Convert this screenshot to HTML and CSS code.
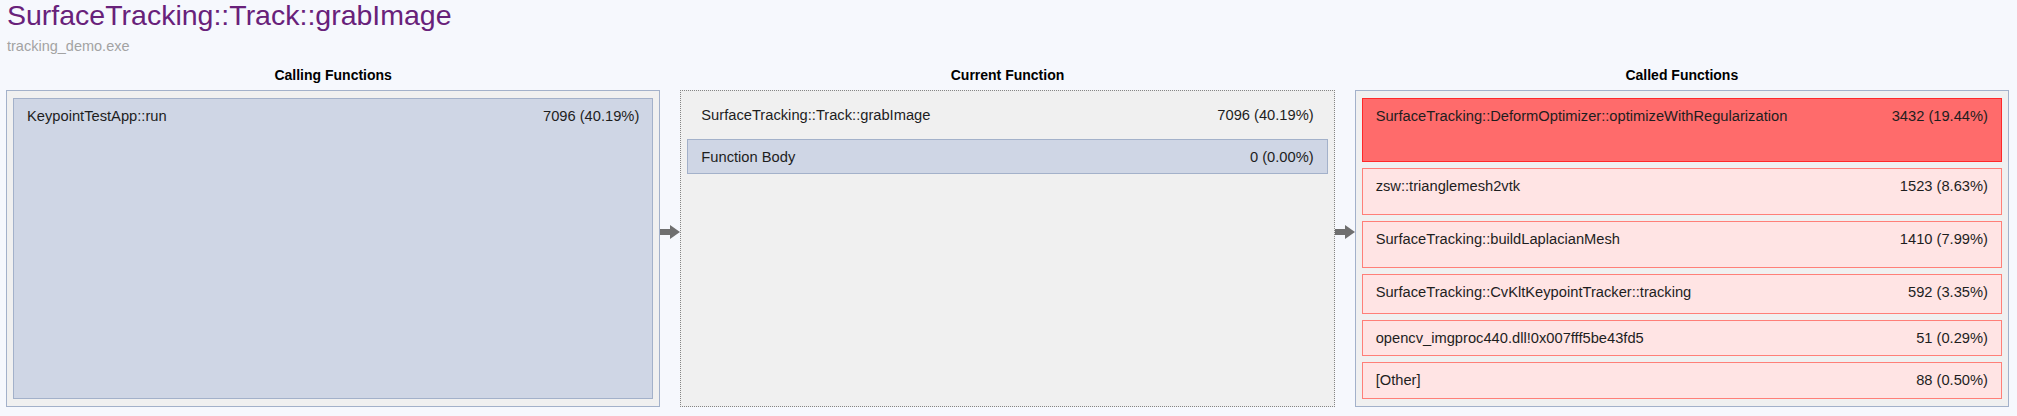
FILE: index.html
```html
<!DOCTYPE html>
<html>
<head>
<meta charset="utf-8">
<link rel="stylesheet" href="styles.css">
</head>
<body>
<h1 class="title">SurfaceTracking::Track::grabImage</h1>
<div class="subtitle">tracking_demo.exe</div>
<div class="board">
  <div class="col-head c1">Calling Functions</div>
  <div class="col-head c3">Current Function</div>
  <div class="col-head c5">Called Functions</div>

  <div class="panel c1">
    <div class="item item-blue item-fill"><span>KeypointTestApp::run</span><span>7096 (40.19%)</span></div>
  </div>
  <div class="arrow c2"><svg width="20" height="14" viewBox="0 0 20 14"><rect x="0" y="4" width="11" height="6" fill="#6f6f6f"/><polygon points="10,0 20,7 10,14" fill="#6f6f6f"/></svg></div>
  <div class="panel panel-current c3">
    <div class="item item-plain"><span>SurfaceTracking::Track::grabImage</span><span>7096 (40.19%)</span></div>
    <div class="item item-blue"><span>Function Body</span><span>0 (0.00%)</span></div>
  </div>
  <div class="arrow c4"><svg width="20" height="14" viewBox="0 0 20 14"><rect x="0" y="4" width="11" height="6" fill="#6f6f6f"/><polygon points="10,0 20,7 10,14" fill="#6f6f6f"/></svg></div>
  <div class="panel c5 called">
    <div class="item item-hot" style="height:64px"><span>SurfaceTracking::DeformOptimizer::optimizeWithRegularization</span><span>3432 (19.44%)</span></div>
    <div class="item item-warm" style="height:47px"><span>zsw::trianglemesh2vtk</span><span>1523 (8.63%)</span></div>
    <div class="item item-warm" style="height:47px"><span>SurfaceTracking::buildLaplacianMesh</span><span>1410 (7.99%)</span></div>
    <div class="item item-warm" style="height:40px"><span>SurfaceTracking::CvKltKeypointTracker::tracking</span><span>592 (3.35%)</span></div>
    <div class="item item-warm" style="height:36px"><span>opencv_imgproc440.dll!0x007fff5be43fd5</span><span>51 (0.29%)</span></div>
    <div class="item item-warm" style="height:37px"><span>[Other]</span><span>88 (0.50%)</span></div>
  </div>
</div>
</body>
</html>
```
FILE: styles.css
```css
html, body {
  margin: 0;
  padding: 0;
}
body {
  background: #f6f8fd;
  font-family: "Liberation Sans", Arial, sans-serif;
  color: #1e1e1e;
  width: 2017px;
  height: 416px;
  overflow: hidden;
}
.title {
  margin: 0;
  padding-left: 7px;
  font-size: 28.5px;
  font-weight: normal;
  line-height: 30px;
  color: #68217a;
}
.subtitle {
  margin-top: 6px;
  padding-left: 7px;
  font-size: 14.5px;
  line-height: 20px;
  color: #a3a3a3;
}
.board {
  margin-top: 10px;
  padding: 0 8px 0 6px;
  display: grid;
  grid-template-columns: 1fr 20px 1fr 20px 1fr;
  grid-template-rows: 18px 317px;
  row-gap: 6px;
}
.c1 { grid-column: 1; }
.c2 { grid-column: 2; }
.c3 { grid-column: 3; }
.c4 { grid-column: 4; }
.c5 { grid-column: 5; }
.col-head {
  grid-row: 1;
  text-align: center;
  font-weight: bold;
  font-size: 14px;
  line-height: 18px;
  color: #000;
}
.panel {
  grid-row: 2;
  box-sizing: border-box;
  border: 1px solid #a3b1ca;
  background: #f0f0f0;
  padding: 7px 6px;
  display: flex;
  flex-direction: column;
  min-width: 0;
}
.panel-current {
  border: 1px dotted #858585;
}
.called {
  gap: 6px;
}
.arrow {
  grid-row: 2;
  align-self: start;
  margin-top: 135px;
  height: 14px;
  display: flex;
}
.item {
  box-sizing: border-box;
  border: 1px solid transparent;
  padding: 7px 13px 0 13px;
  display: flex;
  justify-content: space-between;
  align-items: flex-start;
  font-size: 14.7px;
  line-height: 20px;
  white-space: nowrap;
  flex: none;
}
.item-fill {
  flex: 1;
}
.item-plain {
  height: 41px;
  padding-top: 6px;
}
.item-blue {
  background: #cfd6e5;
  border-color: #a3b1ca;
}
.panel-current .item-blue {
  height: 35px;
}
.item-hot {
  background: #ff6b6b;
  border-color: #ff2828;
}
.item-warm {
  background: #ffe4e4;
  border-color: #ff7f78;
}
```
